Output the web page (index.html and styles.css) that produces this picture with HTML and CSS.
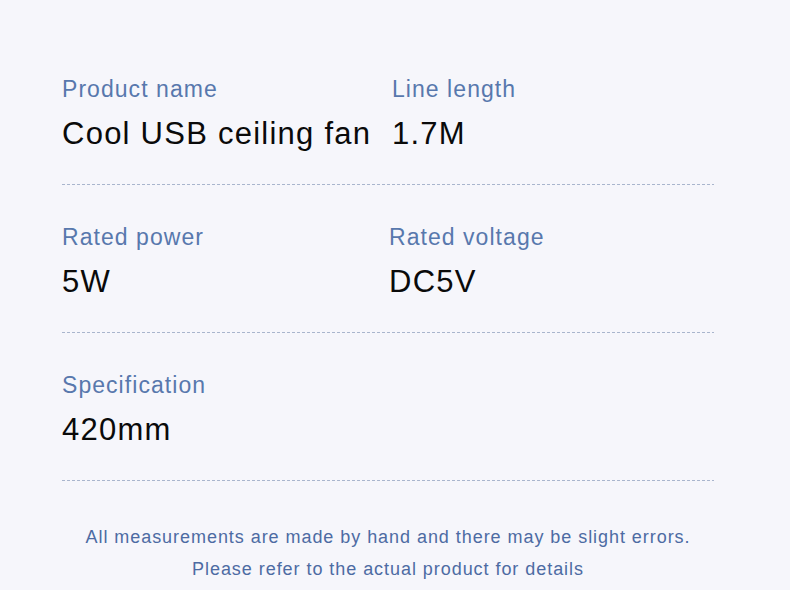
FILE: index.html
```html
<!DOCTYPE html>
<html lang="en">
<head>
<meta charset="utf-8">
<link rel="stylesheet" href="styles.css">
</head>
<body>
<main class="sheet">
  <section class="row">
    <div class="cell cell-first">
      <div class="label">Product name</div>
      <div class="value">Cool USB ceiling fan</div>
    </div>
    <div class="cell cell-second">
      <div class="label">Line length</div>
      <div class="value">1.7M</div>
    </div>
  </section>
  <div class="rule"></div>
  <section class="row">
    <div class="cell cell-first">
      <div class="label">Rated power</div>
      <div class="value">5W</div>
    </div>
    <div class="cell cell-second cell-shift">
      <div class="label">Rated voltage</div>
      <div class="value">DC5V</div>
    </div>
  </section>
  <div class="rule"></div>
  <section class="row">
    <div class="cell cell-first">
      <div class="label">Specification</div>
      <div class="value">420mm</div>
    </div>
  </section>
  <div class="rule"></div>
  <footer class="note">
    <p>All measurements are made by hand and there may be slight errors.</p>
    <p>Please refer to the actual product for details</p>
  </footer>
</main>
</body>
</html>
```

FILE: styles.css
```css
html, body {
  margin: 0;
  padding: 0;
  background: #f6f6fb;
}
body {
  width: 790px;
  height: 590px;
  overflow: hidden;
  font-family: "Liberation Sans", Arial, sans-serif;
}
.sheet {
  width: 652px;
  margin-left: 62px;
  padding-top: 74px;
}
.row {
  display: grid;
  grid-template-columns: 330px 1fr;
  padding-bottom: 30px;
}
.rule + .row {
  padding-top: 37px;
}
.cell-shift {
  margin-left: -3px;
}
.label {
  font-size: 23px;
  line-height: 30px;
  color: #5878ad;
  letter-spacing: 1.05px;
}
.value {
  margin-top: 10px;
  font-size: 31px;
  line-height: 40px;
  color: #0a0a0a;
  letter-spacing: 1.25px;
}
.rule {
  height: 1px;
  background: repeating-linear-gradient(to right, #a9b5cd 0 3px, transparent 3px 5px);
}
.note {
  margin-top: 40px;
  text-align: center;
  color: #4d6ba3;
  font-size: 18px;
  line-height: 32px;
  letter-spacing: 0.95px;
}
.note p {
  margin: 0;
}
```
